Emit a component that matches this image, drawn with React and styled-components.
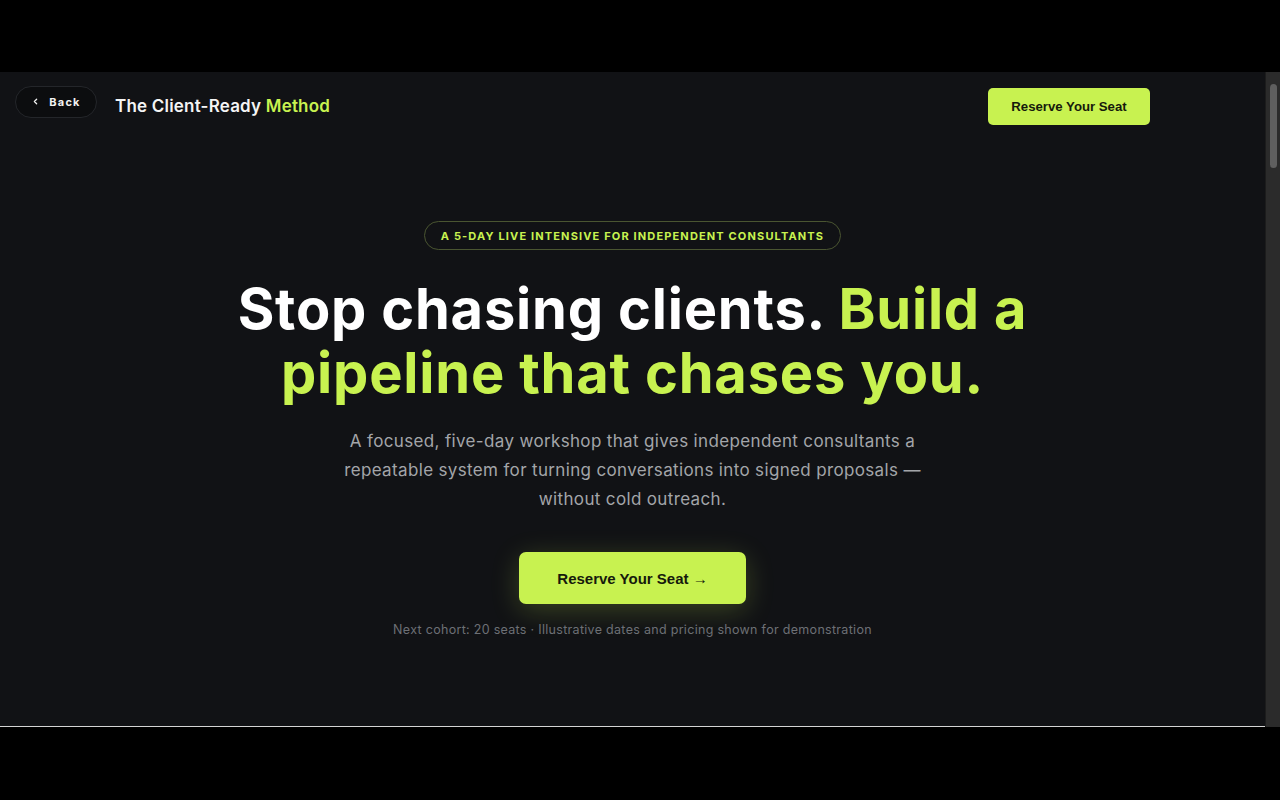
import { createGlobalStyle, styled } from "styled-components"

const LIME = "#c8f250"
const BG = "#111215"

const GlobalStyle = createGlobalStyle`
    html, body {
        margin: 0;
        padding: 0;
        background: #000000;
    }
    * {
        box-sizing: border-box;
    }
`

const Screen = styled.div`
    width: 1280px;
    height: 800px;
    display: flex;
    flex-direction: column;
    background: #000000;
    overflow: hidden;
`

const Letterbox = styled.div`
    height: ${(props) => props.h}px;
    flex-shrink: 0;
    background: #000000;
`

const Viewport = styled.div`
    height: 655px;
    display: flex;
    flex-shrink: 0;
`

const Page = styled.div`
    flex: 1;
    display: flex;
    flex-direction: column;
    background: ${BG};
    border-bottom: 1px solid #d4d4d4;
    font-family: Inter, "Noto Sans", sans-serif;
    color: #ffffff;
`

const Scrollbar = styled.div`
    width: 15px;
    background: #2b2b2b;
    border-left: 1px solid #1c1c1c;
    padding: 12px 3px 0 4px;
`

const Thumb = styled.div`
    height: 84px;
    border-radius: 4px;
    background: #5f5f5f;
`

const Header = styled.header`
    height: 68px;
    display: flex;
    align-items: center;
    padding: 0 115px 0 15px;
`

const BackButton = styled.button`
    height: 32px;
    width: 82px;
    display: flex;
    align-items: center;
    justify-content: center;
    gap: 9px;
    border: 1px solid #24262a;
    border-radius: 16px;
    background: #0c0d0f;
    color: #f2f2f2;
    font-family: Inter, sans-serif;
    font-size: 11px;
    font-weight: 700;
    letter-spacing: 1.2px;
    cursor: pointer;
    margin-top: -9px;
`

const Brand = styled.div`
    margin-left: 18px;
    font-size: 17px;
    font-weight: 600;
    letter-spacing: 0.2px;
    color: #f4f4f4;
`

const Accent = styled.span`
    color: ${LIME};
`

const Spacer = styled.div`
    flex: 1;
`

const CtaButton = styled.button`
    height: ${(props) => (props.large ? 52 : 37)}px;
    width: ${(props) => (props.large ? 227 : 162)}px;
    border: none;
    border-radius: ${(props) => (props.large ? 7 : 5)}px;
    background: ${LIME};
    color: #161a0c;
    font-family: "Liberation Sans", Arial, sans-serif;
    font-size: ${(props) => (props.large ? 15 : 13.2)}px;
    font-weight: 700;
    cursor: pointer;
    box-shadow: ${(props) => (props.large ? "0 6px 28px rgba(200, 242, 80, 0.22)" : "none")};
`

const Hero = styled.main`
    display: flex;
    flex-direction: column;
    align-items: center;
    padding-top: 81px;
`

const Badge = styled.div`
    height: 29px;
    padding: 0 16px;
    display: flex;
    align-items: center;
    border: 1px solid #4a5531;
    border-radius: 15px;
    color: ${LIME};
    font-size: 11px;
    font-weight: 700;
    letter-spacing: 1.15px;
`

const Headline = styled.h1`
    margin: 27px 0 0;
    text-align: center;
    font-size: 56px;
    line-height: 64px;
    font-weight: 700;
    letter-spacing: 0.8px;
    color: #ffffff;
`

const Lede = styled.p`
    margin: 22px 0 0;
    width: 620px;
    text-align: center;
    font-size: 17px;
    line-height: 29px;
    letter-spacing: 0.35px;
    color: #a3a5a9;
`

const CtaWrap = styled.div`
    margin-top: 38px;
`

const Footnote = styled.p`
    margin: 18px 0 0;
    font-size: 12.5px;
    letter-spacing: 0.3px;
    color: #6d7075;
`

const ChevronLeft = () => (
    <svg width="9" height="9" viewBox="0 0 24 24" fill="none" stroke="currentColor" strokeWidth="3.5" strokeLinecap="round" strokeLinejoin="round">
        <path d="M15 18l-6-6 6-6" />
    </svg>
)

export default () => {
    return (
        <>
        <GlobalStyle />
        <Screen>
            <Letterbox h={72} />
            <Viewport>
                <Page>
                    <Header>
                        <BackButton><ChevronLeft />Back</BackButton>
                        <Brand>The Client-Ready <Accent>Method</Accent></Brand>
                        <Spacer />
                        <CtaButton>Reserve Your Seat</CtaButton>
                    </Header>
                    <Hero>
                        <Badge>A 5-DAY LIVE INTENSIVE FOR INDEPENDENT CONSULTANTS</Badge>
                        <Headline>
                            Stop chasing clients. <Accent>Build a</Accent>
                            <br />
                            <Accent>pipeline that chases you.</Accent>
                        </Headline>
                        <Lede>
                            A focused, five-day workshop that gives independent consultants a repeatable system for turning conversations into signed proposals — without cold outreach.
                        </Lede>
                        <CtaWrap>
                            <CtaButton large>Reserve Your Seat →</CtaButton>
                        </CtaWrap>
                        <Footnote>Next cohort: 20 seats · Illustrative dates and pricing shown for demonstration</Footnote>
                    </Hero>
                </Page>
                <Scrollbar><Thumb /></Scrollbar>
            </Viewport>
            <Letterbox h={73} />
        </Screen>
        </>
    )
}
